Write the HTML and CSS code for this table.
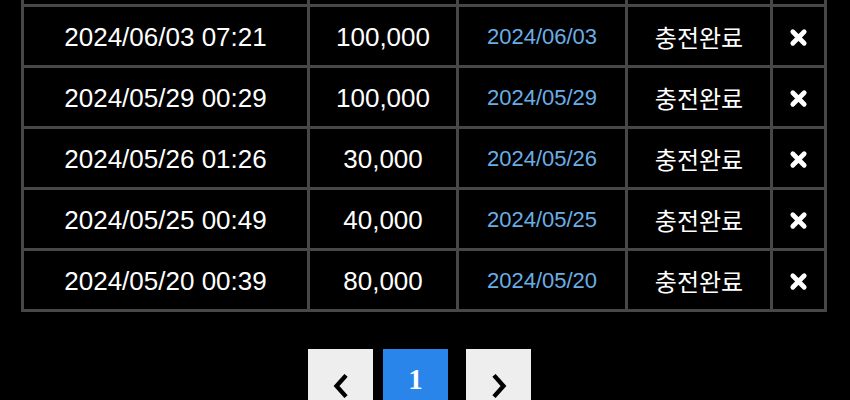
FILE: index.html
```html
<!DOCTYPE html>
<html lang="ko">
<head>
<meta charset="utf-8">
<title>충전내역</title>
<link rel="stylesheet" href="styles.css">
</head>
<body>
<div class="page">
  <table class="history">
    <colgroup>
      <col class="c-time"><col class="c-amount"><col class="c-date"><col class="c-status"><col class="c-del">
    </colgroup>
    <tbody>
      <tr class="row-cut">
        <td></td><td></td><td></td><td></td><td></td>
      </tr>
      <tr>
        <td>2024/06/03 07:21</td><td>100,000</td><td class="date">2024/06/03</td><td class="status">충전완료</td>
        <td class="del"><svg viewBox="0 0 20 20" width="19" height="19"><path d="M4 4 L16 16 M16 4 L4 16" stroke="#fff" stroke-width="5" stroke-linecap="round"/></svg></td>
      </tr>
      <tr>
        <td>2024/05/29 00:29</td><td>100,000</td><td class="date">2024/05/29</td><td class="status">충전완료</td>
        <td class="del"><svg viewBox="0 0 20 20" width="19" height="19"><path d="M4 4 L16 16 M16 4 L4 16" stroke="#fff" stroke-width="5" stroke-linecap="round"/></svg></td>
      </tr>
      <tr>
        <td>2024/05/26 01:26</td><td>30,000</td><td class="date">2024/05/26</td><td class="status">충전완료</td>
        <td class="del"><svg viewBox="0 0 20 20" width="19" height="19"><path d="M4 4 L16 16 M16 4 L4 16" stroke="#fff" stroke-width="5" stroke-linecap="round"/></svg></td>
      </tr>
      <tr>
        <td>2024/05/25 00:49</td><td>40,000</td><td class="date">2024/05/25</td><td class="status">충전완료</td>
        <td class="del"><svg viewBox="0 0 20 20" width="19" height="19"><path d="M4 4 L16 16 M16 4 L4 16" stroke="#fff" stroke-width="5" stroke-linecap="round"/></svg></td>
      </tr>
      <tr>
        <td>2024/05/20 00:39</td><td>80,000</td><td class="date">2024/05/20</td><td class="status">충전완료</td>
        <td class="del"><svg viewBox="0 0 20 20" width="19" height="19"><path d="M4 4 L16 16 M16 4 L4 16" stroke="#fff" stroke-width="5" stroke-linecap="round"/></svg></td>
      </tr>
    </tbody>
  </table>
  <nav class="pager">
    <a class="pg pg-prev" href="#"><svg viewBox="0 0 20 26" width="18" height="24"><path d="M14 3 L5 13 L14 23" fill="none" stroke="#000" stroke-width="4.8" stroke-linecap="square" stroke-linejoin="miter"/></svg></a>
    <a class="pg pg-cur" href="#">1</a>
    <a class="pg pg-next" href="#"><svg viewBox="0 0 20 26" width="18" height="24"><path d="M6 3 L15 13 L6 23" fill="none" stroke="#000" stroke-width="4.8" stroke-linecap="square" stroke-linejoin="miter"/></svg></a>
  </nav>
</div>
</body>
</html>
```
FILE: styles.css
```css
html, body {
  margin: 0;
  padding: 0;
  background: #000;
}
.page {
  width: 850px;
  height: 400px;
  overflow: hidden;
}
.history {
  margin: -57px 0 0 21px;
  width: 803px;
  table-layout: fixed;
  border-collapse: collapse;
  border: 3px solid #474747;
  font-family: "Liberation Sans", Arial, "Noto Sans CJK KR", sans-serif;
  color: #fff;
}
.c-time { width: 286px; }
.c-amount { width: 149px; }
.c-date { width: 169px; }
.c-status { width: 145px; }
.c-del { width: 54px; }
.history tr {
  height: 61px;
}
.history td {
  border: 3px solid #474747;
  text-align: center;
  vertical-align: middle;
  padding: 1px 0 0;
  font-size: 26px;
  line-height: 30px;
}
.history td.date {
  color: #6aaee6;
  font-size: 22px;
}
.history td.status {
  font-family: "Noto Sans CJK KR", sans-serif;
  font-size: 24px;
}
.history td.del svg {
  display: block;
  margin: 2px auto 0;
}
.pager {
  display: flex;
  margin: 37px 0 0 308px;
}
.pg {
  width: 65px;
  height: 65px;
  display: flex;
  align-items: center;
  justify-content: center;
  background: #eeeeee;
  text-decoration: none;
  padding-top: 8px;
  box-sizing: border-box;
}
.pg-cur {
  margin: 0 18px 0 10px;
  background: #2a85ea;
  color: #fff;
  font-family: "Liberation Serif", "Times New Roman", serif;
  font-weight: bold;
  font-size: 29px;
  padding-top: 0;
  padding-bottom: 4px;
}
```
